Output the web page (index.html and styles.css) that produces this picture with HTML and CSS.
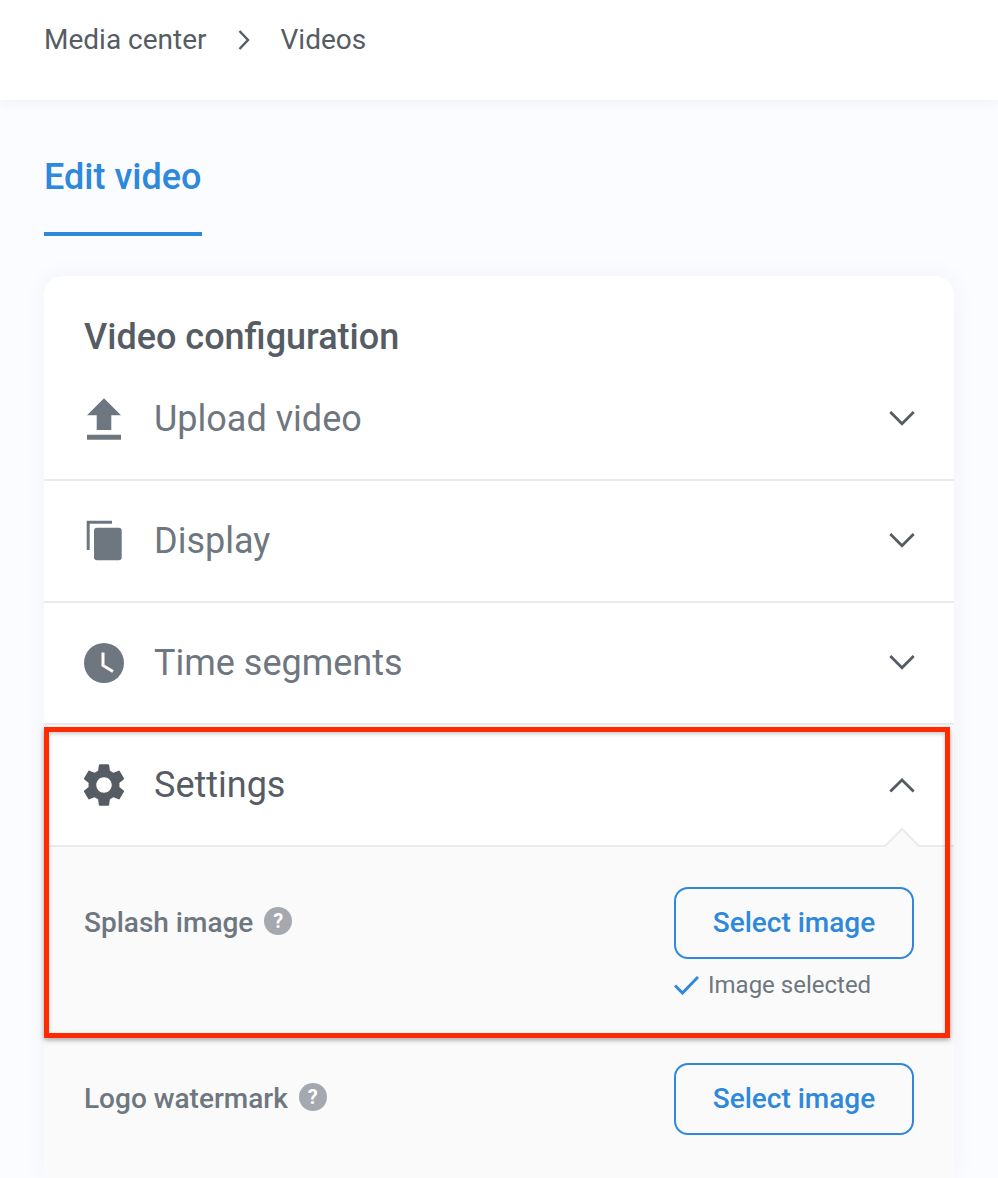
FILE: index.html
```html
<!DOCTYPE html>
<html>
<head>
    <meta charset="UTF-8">
    <title>Edit video</title>
    <link rel="stylesheet" href="styles.css">
</head>
<body>
    <header class="topbar">
        <span>Media center</span>
        <svg class="crumb-sep" viewBox="0 0 14 20"><path d="M3.500 1L12 10l-8.500 9"/></svg>
        <span>Videos</span>
    </header>

    <nav class="tabs">
        <a class="tab">Edit video</a>
    </nav>

    <section class="card">
        <h2 class="card-title">Video configuration</h2>

        <div class="row">
            <svg class="row-icon" viewBox="2.95 2.45 18.1 18.1"><path d="M9 16h6v-6h4l-7-7-7 7h4zm-4 2h14v2H5z"/></svg>
            <span class="row-label">Upload video</span>
            <svg class="chevron" viewBox="0 0 26 16"><path d="M1.3 1L13 12.700 24.700 1"/></svg>
        </div>
        <div class="row">
            <svg class="row-icon" viewBox="0 0 44 44">
                <path d="M4.7 31V1.7H30v3H7.7V31z"/>
                <rect x="12" y="8.7" width="27.7" height="32.6" rx="3"/>
            </svg>
            <span class="row-label">Display</span>
            <svg class="chevron" viewBox="0 0 26 16"><path d="M1.3 1L13 12.700 24.700 1"/></svg>
        </div>
        <div class="row">
            <svg class="row-icon" viewBox="0 0 44 44">
                <circle cx="22" cy="22" r="20"/>
                <path class="clock-hands" d="M21 11.500V24.500L31 30.500"/>
            </svg>
            <span class="row-label">Time segments</span>
            <svg class="chevron" viewBox="0 0 26 16"><path d="M1.3 1L13 12.700 24.700 1"/></svg>
        </div>
        <div class="row row-open">
            <svg class="row-icon" viewBox="1.77 1.77 20.46 20.46"><path d="M19.14 12.94c.04-.3.06-.61.06-.94 0-.32-.02-.64-.07-.94l2.03-1.58c.18-.14.23-.41.12-.61l-1.92-3.32c-.12-.22-.37-.29-.59-.22l-2.39.96c-.5-.38-1.03-.7-1.62-.94l-.36-2.54c-.04-.24-.24-.41-.48-.41h-3.84c-.24 0-.43.17-.47.41l-.36 2.54c-.59.24-1.13.57-1.62.94l-2.39-.96c-.22-.08-.47 0-.59.22L2.74 8.87c-.12.21-.08.47.12.61l2.03 1.58c-.05.3-.09.63-.09.94s.02.64.07.94l-2.03 1.58c-.18.14-.23.41-.12.61l1.92 3.32c.12.22.37.29.59.22l2.39-.96c.5.38 1.03.7 1.62.94l.36 2.54c.05.24.24.41.48.41h3.84c.24 0 .44-.17.47-.41l.36-2.54c.59-.24 1.13-.56 1.62-.94l2.39.96c.22.08.47 0 .59-.22l1.92-3.32c.12-.22.07-.47-.12-.61l-2.01-1.58zM12 15.600c-1.98 0-3.6-1.62-3.6-3.6s1.62-3.6 3.6-3.6 3.6 1.62 3.6 3.6-1.62 3.6-3.6 3.6z"/></svg>
            <span class="row-label">Settings</span>
            <svg class="chevron" viewBox="0 0 26 16"><path d="M1.3 14.500L13 3l11.700 11.500"/></svg>
            <i class="notch"></i>
        </div>

        <div class="panel">
            <div class="field">
                <div class="field-label">
                    <span>Splash image</span>
                    <i class="help">?</i>
                </div>
                <div class="field-control">
                    <button class="btn">Select image</button>
                    <div class="status">
                        <svg class="check" viewBox="0 0 25 20"><path d="M1 10.500l7.500 7.500L24 2"/></svg>
                        <span>Image selected</span>
                    </div>
                </div>
            </div>
            <div class="field">
                <div class="field-label">
                    <span>Logo watermark</span>
                    <i class="help">?</i>
                </div>
                <div class="field-control">
                    <button class="btn">Select image</button>
                </div>
            </div>
        </div>

        <div class="highlight"></div>
    </section>
</body>
</html>
```

FILE: styles.css
```css
:root {
    --background: #fbfcff;
    --blue: #2e88dc;
    --dark: #565c64;
    --muted: #6e7780;
    --line: #ebebeb;
    --panel: #fafafa;
    --red: #ff2a00;
}

* {
    margin: 0;
    padding: 0;
    box-sizing: border-box;
}

html, body {
    height: 1178px;
    overflow: hidden;
}

body {
    background: var(--background);
    font-family: Roboto, "Liberation Sans", sans-serif;
    color: var(--dark);
}

.topbar {
    height: 100px;
    padding: 0 44px 22px;
    display: flex;
    align-items: center;
    background: #fff;
    box-shadow: 0 2px 12px rgba(40, 50, 80, 0.06);
    font-size: 28px;
}

.crumb-sep {
    width: 14px;
    height: 20px;
    margin: 2px 31px 0 29px;
    fill: none;
    stroke: var(--dark);
    stroke-width: 2.4;
}

.tabs {
    display: flex;
    padding: 54px 44px 0;
}

.tab {
    width: 158px;
    height: 82px;
    border-bottom: 4px solid var(--blue);
    color: var(--blue);
    font-size: 36px;
    line-height: 46px;
    font-weight: 500;
}

.card {
    position: relative;
    margin: 40px 44px 0;
    height: 902px;
    background: #fff;
    border-radius: 20px 20px 0 0;
    box-shadow: 0 0 24px rgba(40, 50, 80, 0.05);
}

.card-title {
    padding: 40px 40px 0;
    height: 83px;
    font-size: 36px;
    line-height: 42px;
    font-weight: 500;
}

.row {
    position: relative;
    height: 122px;
    padding: 0 38px;
    display: flex;
    align-items: center;
    border-bottom: 2px solid var(--line);
    color: var(--muted);
}

.row-icon {
    width: 44px;
    height: 44px;
    flex: none;
    fill: currentColor;
}

.clock-hands {
    fill: none;
    stroke: #fff;
    stroke-width: 3;
}

.row-label {
    flex: 1;
    margin-left: 28px;
    font-size: 36px;
}

.row-open {
    color: var(--dark);
}

.chevron {
    width: 26px;
    height: 16px;
    margin-right: 1px;
    fill: none;
    stroke: var(--dark);
    stroke-width: 2.8;
}

.notch {
    position: absolute;
    right: 39px;
    bottom: -14px;
    width: 26px;
    height: 26px;
    background: var(--panel);
    border-top: 2px solid var(--line);
    border-left: 2px solid var(--line);
    transform: rotate(45deg);
}

.panel {
    background: var(--panel);
    height: 331px;
    padding: 40px 40px 0;
}

.field {
    height: 176px;
    display: flex;
    justify-content: space-between;
    align-items: flex-start;
}

.field:last-child {
    height: 72px;
}

.field-label {
    display: flex;
    align-items: center;
    gap: 11px;
    height: 71px;
    font-size: 28px;
    font-weight: 500;
    color: var(--muted);
}

.help {
    width: 28px;
    height: 28px;
    margin-top: -3px;
    border-radius: 50%;
    background: #a5a9af;
    color: #fff;
    font-size: 20px;
    font-weight: 700;
    font-style: normal;
    line-height: 28px;
    text-align: center;
}

.field-control {
    width: 240px;
}

.btn {
    display: block;
    width: 240px;
    height: 72px;
    padding-bottom: 2px;
    background: transparent;
    border: 2px solid var(--blue);
    border-radius: 14px;
    color: var(--blue);
    font-family: inherit;
    font-size: 28px;
    font-weight: 500;
}

.status {
    display: flex;
    align-items: center;
    gap: 9px;
    margin-top: 12px;
    color: var(--muted);
    font-size: 24px;
}

.check {
    width: 25px;
    height: 20px;
    fill: none;
    stroke: var(--blue);
    stroke-width: 3;
}

/* annotation drawn over the settings section */
.highlight {
    position: absolute;
    left: 0;
    top: 451px;
    width: 906px;
    height: 311px;
    border: 5px solid var(--red);
    box-shadow: 0 2px 5px rgba(0, 0, 0, 0.35), inset 0 2px 4px rgba(0, 0, 0, 0.2);
}
```
